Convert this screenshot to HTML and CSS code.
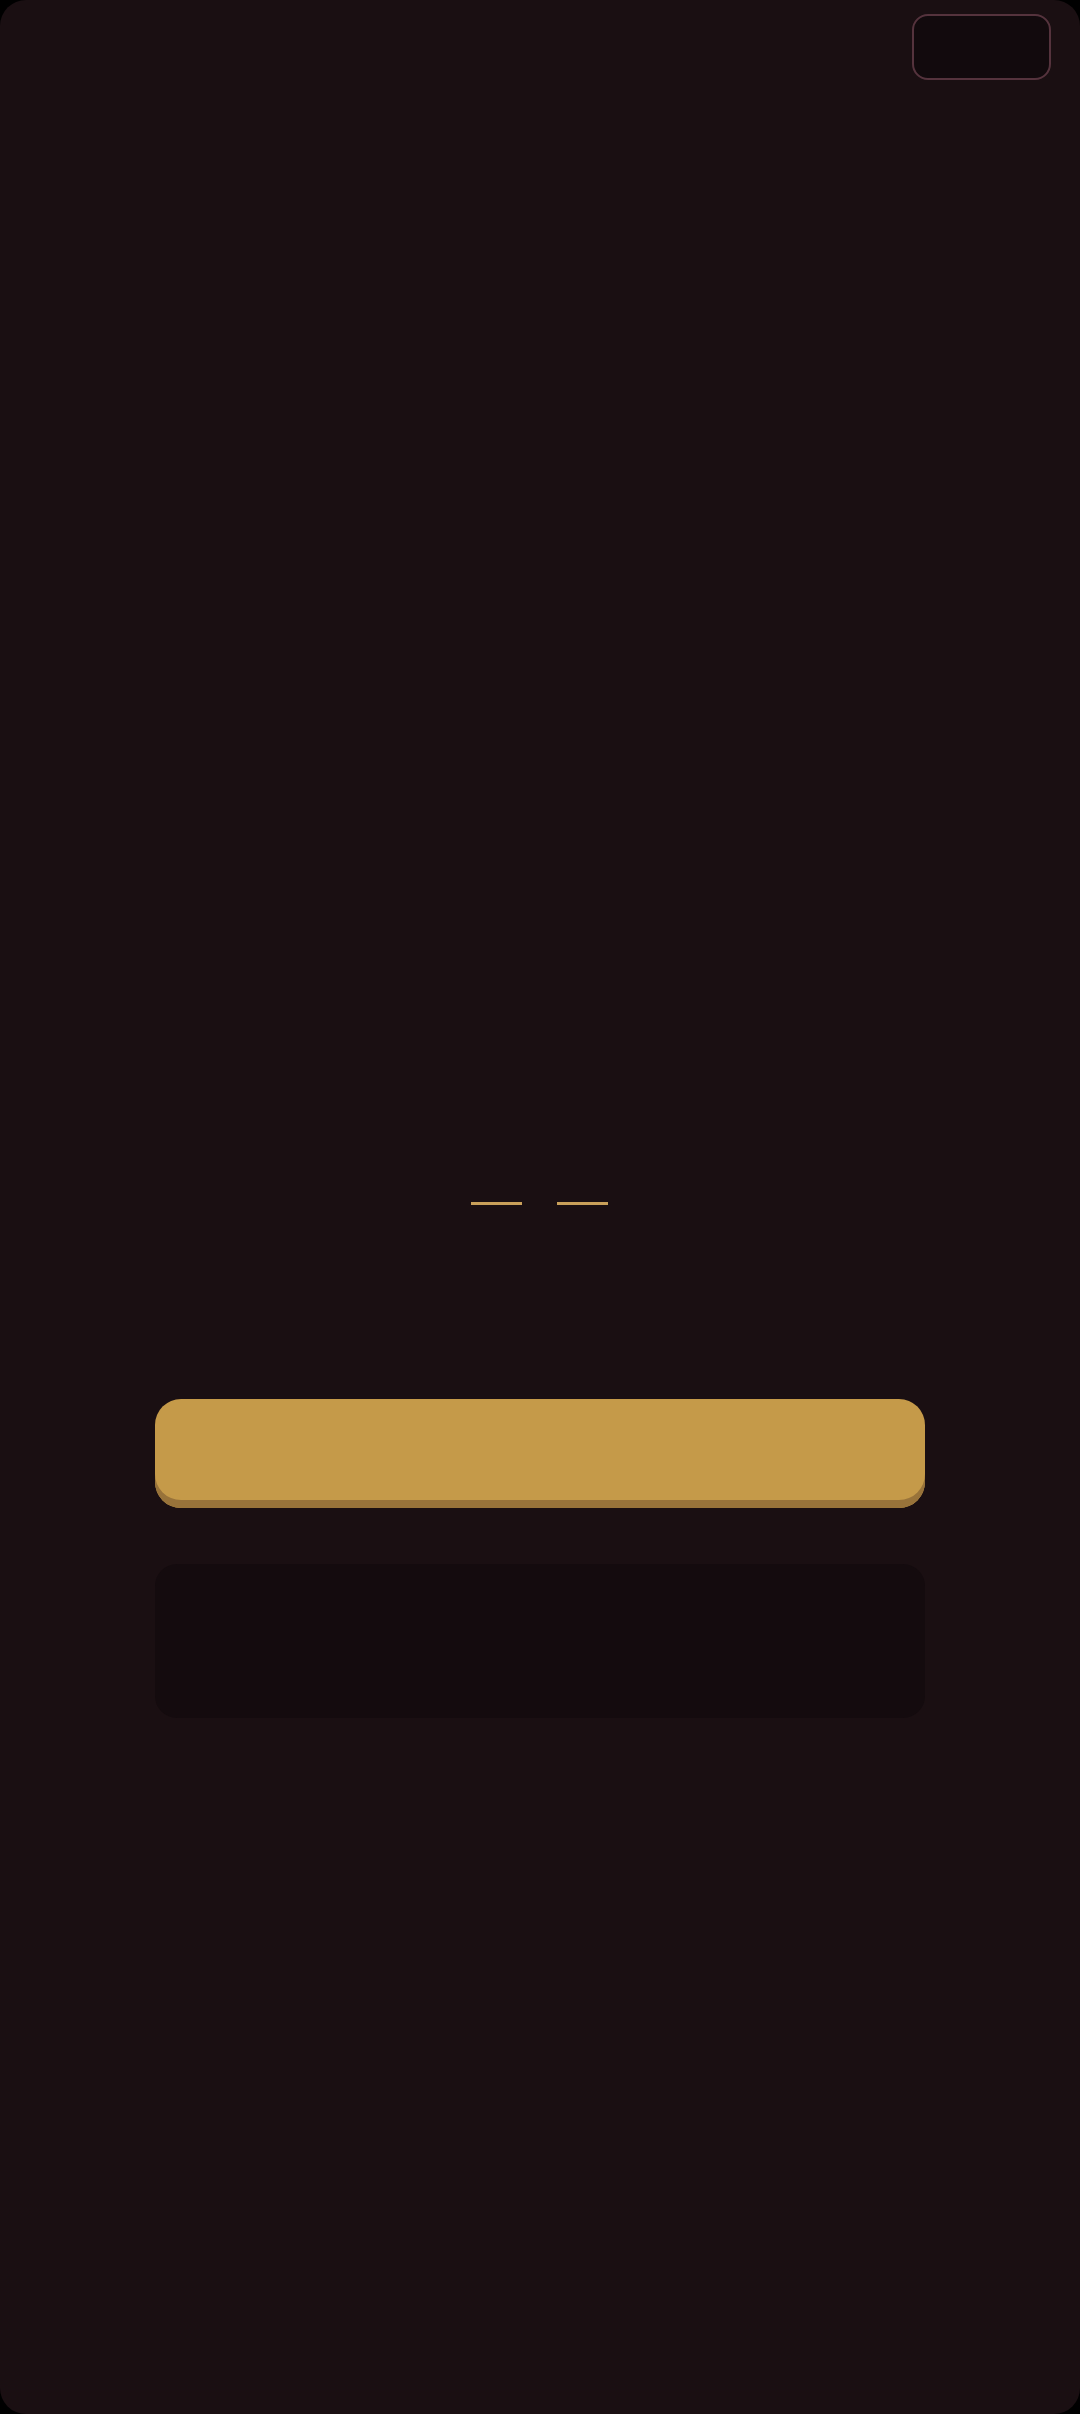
FILE: index.html
```html
<!DOCTYPE html>
<html lang="en">
<head>
    <meta charset="UTF-8">
    <meta name="viewport" content="width=device-width, initial-scale=1.0">
    <title>Code</title>
    <link rel="stylesheet" href="styles.css">
</head>
<body>

    <div class="screen">
        <!-- Top bar -->
        <div class="top-bar">
            <div class="top-chip"></div>
        </div>

        <!-- Code entry -->
        <div class="content">
            <div class="code-slots">
                <span class="slot"></span>
                <span class="slot"></span>
            </div>

            <button class="primary-button"></button>
            <div class="secondary-box"></div>
        </div>
    </div>

</body>
</html>
```

FILE: styles.css
```css
html, body {
    margin: 0;
    padding: 0;
    background-color: #000;
    font-family: "Liberation Sans", Arial, sans-serif;
}

.screen {
    width: 1080px;
    height: 2414px;
    background-color: #1a0f12;
    border-radius: 26px;
    overflow: hidden;
    display: flex;
    flex-direction: column;
}

.top-bar {
    display: flex;
    justify-content: flex-end;
    padding: 14px 29px 0 0;
}

.top-chip {
    width: 135px;
    height: 62px;
    border: 2px solid #55333d;
    border-radius: 16px;
    background-color: #120a0d;
}

.content {
    display: flex;
    flex-direction: column;
    align-items: center;
    padding-top: 1122px;
}

.code-slots {
    display: flex;
    gap: 35px;
    margin-right: 2px;
}

.slot {
    display: block;
    width: 51px;
    height: 3px;
    background-color: #c9a05a;
}

.primary-button {
    margin-top: 194px;
    width: 770px;
    height: 109px;
    border: none;
    border-radius: 26px;
    background-color: #c59a49;
    box-shadow: inset 0 -8px 0 #98733a;
    cursor: pointer;
}

.secondary-box {
    margin-top: 56px;
    width: 770px;
    height: 154px;
    border-radius: 22px;
    background-color: #140b0e;
}
```
